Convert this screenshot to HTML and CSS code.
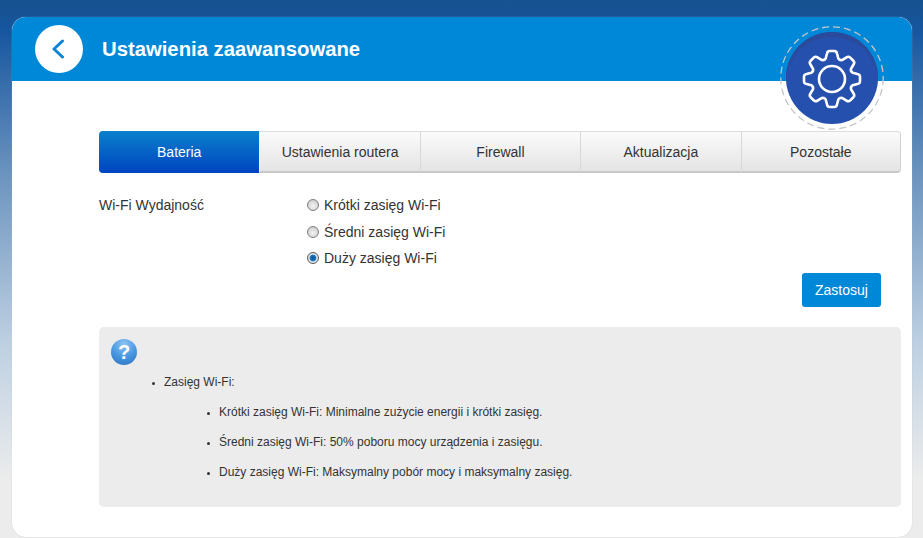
FILE: index.html
```html
<!DOCTYPE html>
<html lang="pl">
<head>
<meta charset="utf-8">
<title>Ustawienia zaawansowane</title>
<link rel="stylesheet" href="styles.css">
</head>
<body>
<main class="card">
  <header class="head">
    <a class="back" href="#" aria-label="Wstecz">
      <svg width="14" height="20" viewBox="0 0 14 20"><path d="M11.500 2 L3 10 L11.500 18" fill="none" stroke="#0a85d6" stroke-width="3" stroke-linecap="round" stroke-linejoin="round"/></svg>
    </a>
    <h1 class="title">Ustawienia zaawansowane</h1>
    <div class="badge">
      <svg class="ring" width="104" height="104" viewBox="0 0 104 104"><circle cx="52" cy="52" r="51.200" fill="none" stroke="#c6c6c6" stroke-width="1.300" stroke-dasharray="7 4"/></svg>
      <div class="disc">
        <svg class="gear" width="60" height="60" viewBox="-30 -30 60 60"><g fill="none" stroke="#fff" stroke-width="2.600" stroke-linejoin="round"><circle r="13"/><path d="M-6.300 -20.500L-5 -25.500Q-4.600 -27.800 -2.500 -28L2.500 -28Q4.600 -27.800 5 -25.500L6.300 -20.500Q7.650 -18.480 10.040 -18.950L14.500 -21.570Q16.400 -22.910 18.030 -21.570L21.570 -18.030Q22.910 -16.400 21.570 -14.500L18.950 -10.040Q18.480 -7.650 20.500 -6.300L25.500 -5Q27.800 -4.600 28 -2.500L28 2.500Q27.800 4.600 25.500 5L20.500 6.300Q18.480 7.650 18.950 10.040L21.570 14.500Q22.910 16.400 21.570 18.030L18.030 21.570Q16.400 22.910 14.500 21.570L10.040 18.950Q7.650 18.480 6.300 20.500L5 25.500Q4.600 27.800 2.500 28L-2.500 28Q-4.600 27.800 -5 25.500L-6.300 20.500Q-7.650 18.480 -10.040 18.950L-14.500 21.570Q-16.400 22.910 -18.030 21.570L-21.570 18.030Q-22.910 16.400 -21.570 14.500L-18.950 10.040Q-18.480 7.650 -20.500 6.300L-25.500 5Q-27.800 4.600 -28 2.500L-28 -2.500Q-27.800 -4.600 -25.500 -5L-20.500 -6.300Q-18.480 -7.650 -18.950 -10.040L-21.570 -14.500Q-22.910 -16.400 -21.570 -18.030L-18.030 -21.570Q-16.400 -22.910 -14.500 -21.570L-10.040 -18.950Q-7.650 -18.480 -6.300 -20.500Z"/></g></svg>
      </div>
    </div>
  </header>
  <section class="body">
    <nav class="tabs">
      <a class="tab active" href="#">Bateria</a>
      <a class="tab" href="#">Ustawienia routera</a>
      <a class="tab" href="#">Firewall</a>
      <a class="tab" href="#">Aktualizacja</a>
      <a class="tab last" href="#">Pozostałe</a>
    </nav>
    <div class="setting">
      <div class="label">Wi-Fi Wydajność</div>
      <div class="options">
        <div class="opt"><span class="radio"></span>Krótki zasięg Wi-Fi</div>
        <div class="opt"><span class="radio"></span>Średni zasięg Wi-Fi</div>
        <div class="opt"><span class="radio on"></span>Duży zasięg Wi-Fi</div>
      </div>
    </div>
    <div class="actions"><button class="apply" type="button">Zastosuj</button></div>
    <aside class="help">
      <div class="qmark">?</div>
      <ul class="outer">
        <li>Zasięg Wi-Fi:
          <ul class="inner">
            <li>Krótki zasięg Wi-Fi: Minimalne zużycie energii i krótki zasięg.</li>
            <li>Średni zasięg Wi-Fi: 50% poboru mocy urządzenia i zasięgu.</li>
            <li>Duży zasięg Wi-Fi: Maksymalny pobór mocy i maksymalny zasięg.</li>
          </ul>
        </li>
      </ul>
    </aside>
  </section>
</main>
</body>
</html>
```
FILE: styles.css
```css
* { box-sizing: border-box; }
html, body { height: 100%; }
body {
  margin: 0;
  height: 538px;
  overflow: hidden;
  padding: 17px 11px 1px 12px;
  background: linear-gradient(180deg, #17518f 0, #16569f 30px, #6f96c0 180px, #bccfe2 340px, #ececec 480px);
  font-family: "Liberation Sans", Arial, sans-serif;
  color: #333;
}
.card {
  height: 520px;
  background: #fff;
  border-radius: 14px;
  box-shadow: 0 0 1px #bbb;
}
.head {
  position: relative;
  height: 64px;
  background: #0088d8;
  border-radius: 14px 14px 0 0;
  display: flex;
  align-items: center;
  padding-left: 23px;
}
.back {
  width: 48px;
  height: 48px;
  border-radius: 50%;
  background: #fff;
  display: flex;
  align-items: center;
  justify-content: center;
  padding-right: 2px;
}
.title {
  margin: 0 0 0 19px;
  color: #fff;
  font-size: 20.300px;
  font-weight: bold;
}
.badge {
  position: absolute;
  left: 768px;
  top: 9px;
  width: 104px;
  height: 104px;
  display: flex;
  align-items: center;
  justify-content: center;
}
.ring {
  position: absolute;
  inset: 0;
}
.disc {
  width: 92px;
  height: 92px;
  border-radius: 50%;
  background: #2650ae;
  box-shadow: inset 0 5px 0 #2a4a9c;
  display: flex;
  align-items: center;
  justify-content: center;
}
.gear { margin-top: 2px; }
.body { padding: 50px 11px 0 87px; }
.tabs {
  display: flex;
  height: 42px;
}
.tab {
  flex: 0 0 20%;
  display: flex;
  align-items: center;
  justify-content: center;
  font-size: 14px;
  color: #333;
  text-decoration: none;
  background: linear-gradient(180deg, #fbfbfb, #e4e4e4);
  border-top: 1px solid #dcdcdc;
  border-left: 1px solid #d8d8d8;
  border-bottom: 2px solid #c8c8c8;
}
.tab.active {
  color: #fff;
  background: linear-gradient(180deg, #0a80cb, #0044c0);
  border: 0;
  border-radius: 4px 0 0 4px;
}
.tab.active + .tab { border-left-color: #f2f2f2; }
.tab.last { border-radius: 0 4px 4px 0; border-right: 1px solid #d0d0d0; }
.setting {
  display: flex;
  margin-top: 19px;
  font-size: 14px;
}
.label { width: 208px; padding-top: 5px; }
.options { display: flex; flex-direction: column; }
.opt {
  display: flex;
  align-items: center;
  height: 26.500px;
}
.radio {
  width: 12px;
  height: 12px;
  margin-right: 5px;
  border-radius: 50%;
  border: 1px solid #808080;
  background: radial-gradient(circle at 50% 60%, #f2f2f2 0, #dcdcdc 50%, #bdbdbd 100%);
}
.radio.on {
  background: radial-gradient(circle, #0b4f8f 0, #1578c4 40%, #e8e8e8 55%, #cfcfcf 100%);
  border-color: #5a5a5a;
}
.actions {
  display: flex;
  justify-content: flex-end;
  padding-right: 20px;
  margin-top: 1px;
}
.apply {
  width: 79px;
  height: 34px;
  border: 0;
  border-radius: 3px;
  background: #0088d8;
  color: #fff;
  font: 14px "Liberation Sans", Arial, sans-serif;
  padding: 0;
}
.help {
  margin-top: 20px;
  height: 180px;
  background: #ececec;
  border-radius: 5px;
  padding: 12px 12px 0;
  font-size: 12px;
}
.qmark {
  width: 26px;
  height: 26px;
  border-radius: 50%;
  background: radial-gradient(circle at 50% 20%, #8cc4f2 0, #4a98e2 50%, #2a70c0 100%);
  color: #fff;
  font-size: 20px;
  font-weight: bold;
  line-height: 26px;
  text-align: center;
}
.outer { margin: 10px 0 0; padding-left: 53px; }
.outer > li { line-height: 14px; }
.outer li::marker { font-size: 9px; }
.inner { margin: 16px 0 0; padding-left: 55px; list-style-type: disc; }
.inner li { line-height: 14px; margin-bottom: 16px; }
```
